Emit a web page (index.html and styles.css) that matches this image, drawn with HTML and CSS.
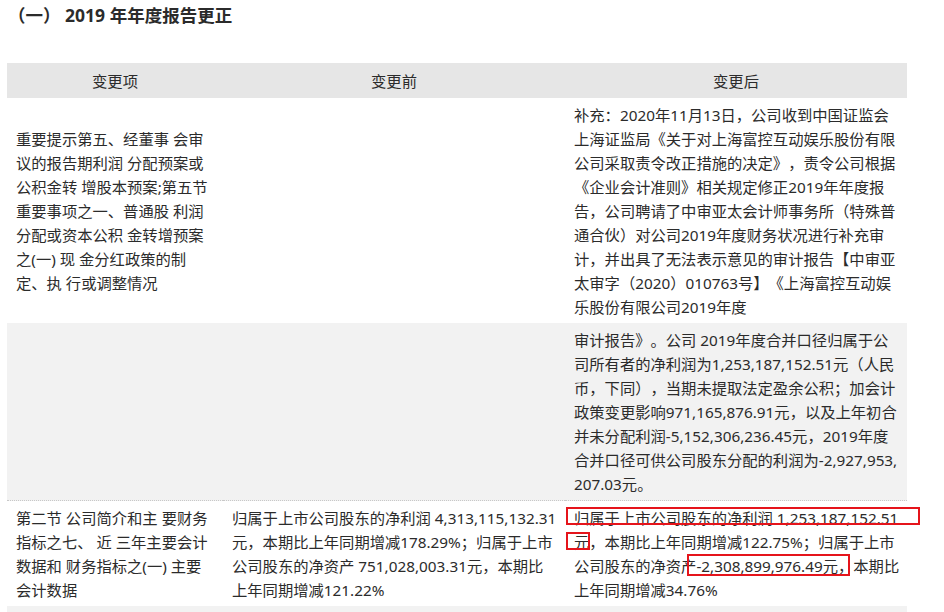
FILE: index.html
```html
<!DOCTYPE html>
<html lang="zh-CN">
<head>
    <meta charset="UTF-8" />
    <title>2019 年年度报告更正</title>
    <link rel="stylesheet" href="styles.css">
</head>
<body>
<h3 class="section-title">（一） 2019 年年度报告更正</h3>

<table class="fix-table">
    <colgroup>
        <col class="col-item">
        <col class="col-before">
        <col class="col-after">
    </colgroup>
    <thead>
    <tr>
        <th>变更项</th>
        <th>变更前</th>
        <th>变更后</th>
    </tr>
    </thead>
    <tbody>
    <tr>
        <td>重要提示第五、经董事 会审议的报告期利润 分配预案或公积金转 增股本预案;第五节重要事项之一、普通股 利润分配或资本公积 金转增预案之(一) 现 金分红政策的制定、执 行或调整情况</td>
        <td></td>
        <td class="top">补充：2020年11月13日，公司收到中国证监会上海证监局《关于对上海富控互动娱乐股份有限公司采取责令改正措施的决定》，责令公司根据《企业会计准则》相关规定修正2019年年度报告，公司聘请了中审亚太会计师事务所（特殊普通合伙）对公司2019年度财务状况进行补充审计，并出具了无法表示意见的审计报告【中审亚太审字（2020）010763号】《上海富控互动娱乐股份有限公司2019年度</td>
    </tr>
    <tr class="shade dotted">
        <td></td>
        <td></td>
        <td class="top">审计报告》。公司 2019年度合并口径归属于公司所有者的净利润为1,253,187,152.51元（人民币，下同），当期未提取法定盈余公积；加会计政策变更影响971,165,876.91元，以及上年初合并未分配利润-5,152,306,236.45元，2019年度合并口径可供公司股东分配的利润为-2,927,953,<br>207.03元。</td>
    </tr>
    <tr>
        <td>第二节 公司简介和主 要财务指标之七、 近 三年主要会计数据和 财务指标之(一) 主要会计数据</td>
        <td>归属于上市公司股东的净利润 4,313,115,132.31元，本期比上年同期增减178.29%；归属于上市公司股东的净资产 751,028,003.31元，本期比上年同期增减121.22%</td>
        <td>
            <div class="after-note">
                归属于上市公司股东的净利润 1,253,187,152.51元，本期比上年同期增减122.75%；归属于上市公司股东的净资产-2,308,899,976.49元，本期比上年同期增减34.76%
                <span class="mark mark-profit"></span>
                <span class="mark mark-unit"></span>
                <span class="mark mark-assets"></span>
            </div>
        </td>
    </tr>
    <tr class="shade">
        <td class="empty"></td>
        <td></td>
        <td></td>
    </tr>
    </tbody>
</table>
</body>
</html>
```

FILE: styles.css
```css
body {
    margin: 0;
    font-family: "Noto Sans", "Noto Sans CJK SC", sans-serif;
    color: #2b2b2b;
}

.section-title {
    margin: 3px 0 0 8px;
    font-size: 17.5px;
    line-height: 24px;
    font-weight: bold;
    text-spacing-trim: space-all;
}

.fix-table {
    border-collapse: collapse;
    table-layout: fixed;
    width: 900px;
    margin: 36px 0 0 7px;
    font-size: 15.3px;
    line-height: 24px;
    text-spacing-trim: space-all;
}

.col-item {
    width: 216px;
}

.col-before {
    width: 342px;
}

.col-after {
    width: 342px;
}

th {
    height: 35px;
    padding: 0;
    background-color: #e6e6e6;
    font-weight: normal;
    text-align: center;
}

td {
    padding: 5px 7px 4px 9px;
    vertical-align: middle;
    text-align: left;
}

td.top {
    vertical-align: top;
}

tr.shade td {
    background-color: #f2f2f2;
}

tr.dotted td {
    border-bottom: 1px dotted #c8c8c8;
}

td.empty {
    height: 40px;
}

.after-note {
    position: relative;
}

/* red annotation frames drawn over the text */
.mark {
    position: absolute;
    border: 2px solid #e5141b;
}

.mark-profit {
    left: -8px;
    top: 1px;
    width: 350px;
    height: 14px;
}

.mark-unit {
    left: -8px;
    top: 26px;
    width: 20px;
    height: 14px;
}

.mark-assets {
    left: 113px;
    top: 48px;
    width: 159px;
    height: 18px;
}
```
